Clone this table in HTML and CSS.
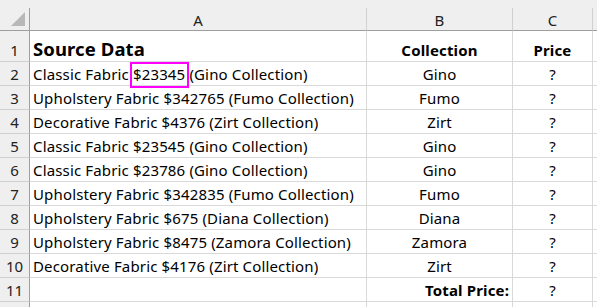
FILE: index.html
```html
<!DOCTYPE html>
<html>
<head>
<meta charset="utf-8">
<link rel="stylesheet" href="styles.css">
</head>
<body>
<div class="sheet">
  <div class="topbar"></div>
  <div class="grid">
    <div class="hd corner"><span class="tri"></span></div>
    <div class="hd col">A</div>
    <div class="hd col">B</div>
    <div class="hd col">C</div>
    <div class="hd col last"></div>

    <div class="rh r1">1</div>
    <div class="c r1 title">Source Data</div>
    <div class="c r1 ctr bold">Collection</div>
    <div class="c r1 ctr bold">Price</div>
    <div class="c r1 last"></div>

    <div class="rh">2</div>
    <div class="c">Classic Fabric&nbsp;<span class="mark">$23345&nbsp;</span>(Gino Collection)</div>
    <div class="c ctr">Gino</div>
    <div class="c ctr">?</div>
    <div class="c last"></div>

    <div class="rh">3</div>
    <div class="c">Upholstery Fabric $342765 (Fumo Collection)</div>
    <div class="c ctr">Fumo</div>
    <div class="c ctr">?</div>
    <div class="c last"></div>

    <div class="rh">4</div>
    <div class="c">Decorative Fabric $4376 (Zirt Collection)</div>
    <div class="c ctr">Zirt</div>
    <div class="c ctr">?</div>
    <div class="c last"></div>

    <div class="rh">5</div>
    <div class="c">Classic Fabric $23545 (Gino Collection)</div>
    <div class="c ctr">Gino</div>
    <div class="c ctr">?</div>
    <div class="c last"></div>

    <div class="rh">6</div>
    <div class="c">Classic Fabric $23786 (Gino Collection)</div>
    <div class="c ctr">Gino</div>
    <div class="c ctr">?</div>
    <div class="c last"></div>

    <div class="rh">7</div>
    <div class="c">Upholstery Fabric $342835 (Fumo Collection)</div>
    <div class="c ctr">Fumo</div>
    <div class="c ctr">?</div>
    <div class="c last"></div>

    <div class="rh">8</div>
    <div class="c">Upholstery Fabric $675 (Diana Collection)</div>
    <div class="c ctr">Diana</div>
    <div class="c ctr">?</div>
    <div class="c last"></div>

    <div class="rh">9</div>
    <div class="c">Upholstery Fabric $8475 (Zamora Collection)</div>
    <div class="c ctr">Zamora</div>
    <div class="c ctr">?</div>
    <div class="c last"></div>

    <div class="rh">10</div>
    <div class="c">Decorative Fabric $4176 (Zirt Collection)</div>
    <div class="c ctr">Zirt</div>
    <div class="c ctr">?</div>
    <div class="c last"></div>

    <div class="rh">11</div>
    <div class="c"></div>
    <div class="c right bold">Total Price:</div>
    <div class="c ctr">?</div>
    <div class="c last"></div>

    <div class="rh tail"></div>
    <div class="c tail"></div>
    <div class="c tail"></div>
    <div class="c tail"></div>
    <div class="c tail last"></div>
  </div>
</div>
</body>
</html>
```

FILE: styles.css
```css
* { box-sizing: border-box; }
html, body { margin: 0; padding: 0; background: #ffffff; }
body {
  font-family: "Noto Sans", "Liberation Sans", sans-serif;
  font-size: 15px;
  letter-spacing: 0.15px;
  color: #000;
  width: 597px;
  height: 307px;
  overflow: hidden;
}
.topbar { height: 8px; background: #efefef; }
.grid {
  display: grid;
  grid-template-columns: 30px 337px 146px 80px 4px;
  grid-template-rows: 23px 31px repeat(10, 24px) 10px;
}
.hd {
  background: #efefef;
  border-right: 1px solid #d0d0d0;
  border-bottom: 1px solid #9e9e9e;
  display: flex;
  align-items: flex-end;
  justify-content: center;
  padding-bottom: 1px;
  color: #222;
  line-height: 18px;
  letter-spacing: 0;
}
.hd.corner { position: relative; border-right: 1px solid #9e9e9e; }
.tri {
  position: absolute;
  right: 4px;
  bottom: 4px;
  width: 0;
  height: 0;
  border-left: 14px solid transparent;
  border-bottom: 14px solid #b8b8b8;
}
.hd.last { border-right: none; }
.rh {
  background: #efefef;
  border-right: 1px solid #9e9e9e;
  border-bottom: 1px solid #d0d0d0;
  display: flex;
  align-items: flex-end;
  justify-content: center;
  padding-bottom: 2px;
  line-height: 18px;
  color: #222;
  letter-spacing: 0;
}
.c {
  border-right: 1px solid #d9d9d9;
  border-bottom: 1px solid #d9d9d9;
  display: flex;
  align-items: flex-end;
  padding: 0 0 2px 3px;
  line-height: 18px;
  white-space: pre;
}
.c.last { border-right: none; }
.tail { border-bottom: none; }
.ctr { justify-content: center; padding-left: 0; }
.right { justify-content: flex-end; padding-right: 3px; }
.bold { font-weight: 700; }
.title { font-weight: 700; font-size: 18.5px; padding-bottom: 1px; line-height: 22px; letter-spacing: 0.1px; }
.mark {
  position: relative;
}
.mark::before {
  content: "";
  position: absolute;
  left: -3px;
  right: 0;
  top: -3px;
  bottom: -5px;
  border: 2px solid #ff00ff;
}
```
